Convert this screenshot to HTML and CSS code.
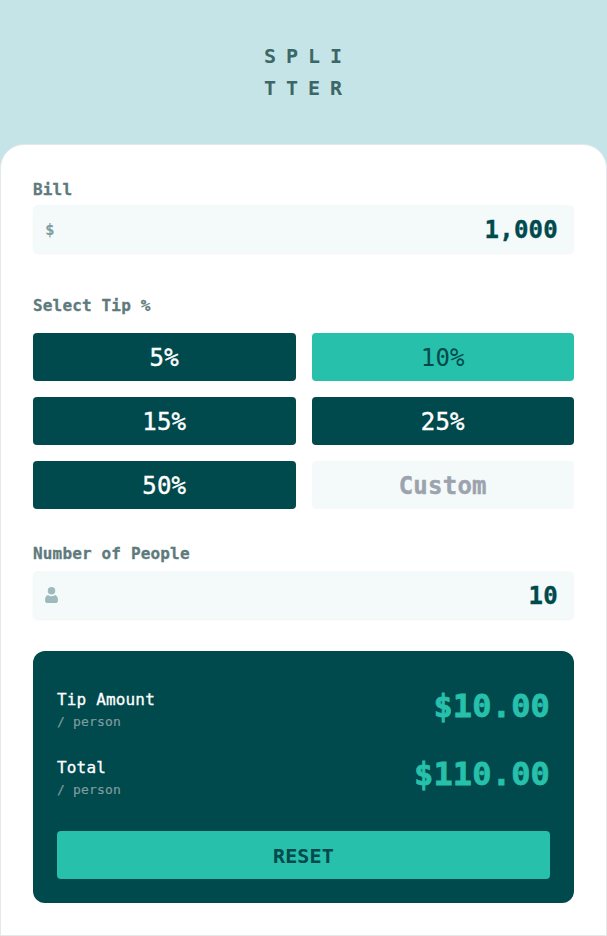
FILE: index.html
```html
<!DOCTYPE html>
<html lang="en">
<head>
<meta charset="utf-8">
<title>Splitter</title>
<link rel="stylesheet" href="styles.css">
</head>
<body>
<header class="logo"><span>SPLI</span><span>TTER</span></header>
<main class="card">
  <label class="label" for="bill">Bill</label>
  <div class="field">
    <span class="dollar">$</span>
    <input id="bill" type="text" value="1,000">
  </div>
  <h2 class="label tip-label">Select Tip %</h2>
  <div class="tips">
    <button class="tip">5%</button>
    <button class="tip active">10%</button>
    <button class="tip">15%</button>
    <button class="tip">25%</button>
    <button class="tip">50%</button>
    <button class="tip custom">Custom</button>
  </div>
  <label class="label people-label" for="people">Number of People</label>
  <div class="field people-field">
    <svg class="person" width="13" height="16" viewBox="0 0 13 16"><circle cx="6.5" cy="3.8" r="3.75"/><path d="M3 8C4 8.8 5.100 9.200 6.500 9.200S9 8.800 10 8C12 8.500 13 10.600 13 13.200Q13 16 10.500 16H2.500Q0 16 0 13.200C0 10.600 1 8.500 3 8Z"/></svg>
    <input id="people" type="text" value="10">
  </div>
  <section class="results">
    <div class="row">
      <div class="caption"><span class="name">Tip Amount</span><span class="per">/ person</span></div>
      <output class="amount">$10.00</output>
    </div>
    <div class="row">
      <div class="caption"><span class="name">Total</span><span class="per">/ person</span></div>
      <output class="amount">$110.00</output>
    </div>
    <button class="reset">RESET</button>
  </section>
</main>
</body>
</html>
```
FILE: styles.css
```css
* { box-sizing: border-box; }
body {
  margin: 0;
  background: #c5e4e7;
  color: #00494d;
  font-family: "DejaVu Sans Mono", "Liberation Mono", monospace;
  letter-spacing: 0.01em;
}
button, input { font: inherit; letter-spacing: 0.01em; border: 0; margin: 0; }
.logo {
  height: 144px;
  padding-top: 40px;
  display: flex;
  flex-direction: column;
  align-items: center;
  font-size: 20px;
  line-height: 32px;
  font-weight: 700;
  letter-spacing: 10px;
  color: #3d6666;
}
.logo span { padding-left: 9px; }
.card {
  height: 792px;
  padding: 33px 32px 0;
  background: #fff;
  border: 1px solid #e5e7eb;
  border-radius: 24px 24px 0 0;
}
.label {
  display: block;
  margin: 0 0 3px;
  font-size: 16px;
  line-height: 24px;
  font-weight: 700;
  color: #5e7a7d;
  -webkit-text-stroke: 0.3px;
}
.field {
  display: flex;
  align-items: center;
  height: 48px;
  margin-bottom: 41px;
  padding: 0 16px 0 12px;
  background: #f4fafa;
  border-radius: 5px;
  box-shadow: 0 1px 2px rgba(0, 0, 0, 0.05);
}
.dollar { font-size: 16px; font-weight: 700; color: #7f9c9f; }
.person { fill: #9dbbbd; }
.field input {
  flex: 1;
  min-width: 0;
  padding: 2px 0 0;
  background: none;
  text-align: right;
  font-size: 24px;
  font-weight: 700;
  color: #00494d;
  -webkit-text-stroke: 0.4px;
}
.tip-label { margin-bottom: 15px; }
.tips {
  display: grid;
  grid-template-columns: 1fr 1fr;
  gap: 16px;
  margin-bottom: 33px;
}
.tip {
  height: 48px;
  padding: 2px 0 0;
  border-radius: 4px;
  background: #00494d;
  color: #fff;
  font-size: 24px;
  -webkit-text-stroke: 0.4px;
}
.tip.active { background: #26c0ab; color: #00494d; -webkit-text-stroke: 0; }
.tip.custom { background: #f4fafa; color: #9ca3af; font-weight: 700; }
.people-label { margin-bottom: 5px; }
.people-field { margin-bottom: 32px; }
.results {
  height: 252px;
  padding: 36px 24px 24px;
  background: #00494d;
  border-radius: 12px;
}
.row {
  display: flex;
  justify-content: space-between;
  height: 68px;
}
.caption { display: flex; flex-direction: column; padding-top: 1px; }
.name { font-size: 16px; line-height: 24px; color: #fff; -webkit-text-stroke: 0.3px; }
.per { font-size: 13px; line-height: 20px; color: #7f9c9f; -webkit-text-stroke: 0.2px; }
.amount {
  font-size: 32px;
  line-height: 38px;
  font-weight: 700;
  color: #26c0ab;
  -webkit-text-stroke: 0.8px;
}
.reset {
  display: block;
  width: 100%;
  height: 48px;
  margin-top: 8px;
  padding: 2px 0 0;
  border-radius: 4px;
  background: #26c0ab;
  color: #00494d;
  font-size: 20px;
  font-weight: 700;
}
```
